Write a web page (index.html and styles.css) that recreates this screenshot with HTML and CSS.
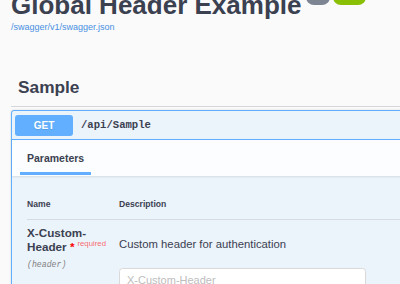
FILE: index.html
```html
<!DOCTYPE html>
<html>
<head>
<meta charset="utf-8">
<link rel="stylesheet" href="styles.css">
</head>
<body>
<div class="page">
  <div class="info">
    <h2 class="title">Global Header Example<span class="badge badge-version">v1</span><span class="badge badge-oas">OAS3</span></h2>
    <a class="spec-url" href="#">/swagger/v1/swagger.json</a>
  </div>
  <div class="tag-section">
    <h3 class="tag">Sample</h3>
    <div class="opblock">
      <div class="summary">
        <span class="method">GET</span>
        <span class="path">/api/Sample</span>
      </div>
      <div class="section-header">
        <div class="tab">Parameters</div>
      </div>
      <div class="params">
        <div class="thead">
          <div class="th">Name</div>
          <div class="th">Description</div>
        </div>
        <div class="prow">
          <div class="pname-col">
            <div class="pname">X-Custom-Header<span class="req-star">&nbsp;*</span><span class="req-label">required</span></div>
            <div class="pin">(header)</div>
          </div>
          <div class="pdesc-col">
            <p class="pdesc">Custom header for authentication</p>
            <input class="pinput" type="text" placeholder="X-Custom-Header">
          </div>
        </div>
      </div>
    </div>
  </div>
</div>
</body>
</html>
```

FILE: styles.css
```css
html, body {
  margin: 0;
  padding: 0;
}
body {
  background: #fafafa;
  overflow: hidden;
  font-family: "Liberation Sans", Arial, sans-serif;
  color: #3b4151;
}
.page {
  display: flow-root;
  width: 460px;
  padding-left: 11px;
}
.title {
  margin: -8px 0 0;
  font-size: 26px;
  line-height: 26px;
  font-weight: 700;
  color: #3b4151;
  white-space: nowrap;
}
.badge {
  display: inline-block;
  vertical-align: 14px;
  margin: -6px 0 0 5px;
  padding: 2px 4px;
  border-radius: 57px;
  font-size: 9.5px;
  line-height: 12px;
  font-weight: 400;
  color: #fff;
}
.badge-version {
  background: #7d8492;
  padding: 2px 6.5px;
}
.badge-oas {
  background: #89bf04;
  margin-left: 3px;
}
.spec-url {
  display: block;
  margin-top: 3.4px;
  font-size: 9px;
  line-height: 12px;
  color: #4990e2;
  text-decoration: none;
}
.tag-section {
  margin-top: 43.7px;
}
.tag {
  margin: 0;
  padding: 0 0 8.9px 7px;
  font-size: 17.3px;
  line-height: 20px;
  font-weight: 700;
  border-bottom: 1px solid #d5d6d9;
}
.opblock {
  margin-top: 3px;
  border: 1px solid #61affe;
  border-radius: 3px;
  background: #ebf3fb;
  box-shadow: 0 0 2px rgba(0, 0, 0, .19);
}
.summary {
  display: flex;
  align-items: center;
  gap: 8px;
  padding: 4px 3px 3px;
  border-bottom: 1px solid #61affe;
}
.method {
  width: 58px;
  height: 21px;
  border-radius: 3px;
  background: #61affe;
  color: #fff;
  font-size: 10px;
  font-weight: 700;
  display: flex;
  align-items: center;
  justify-content: center;
  text-shadow: 0 1px 0 rgba(0, 0, 0, .1);
}
.path {
  font-family: "Liberation Mono", "Courier New", monospace;
  font-weight: 700;
  font-size: 10.6px;
  color: #3b4151;
}
.section-header {
  display: flex;
  padding: 12px 8px 1px;
  background: rgba(255, 255, 255, .8);
  box-shadow: 0 1px 2px rgba(0, 0, 0, .1);
}
.tab {
  padding: 0 7px 7px;
  border-bottom: 3px solid #61affe;
  font-size: 10.5px;
  line-height: 13px;
  font-weight: 700;
}
.params {
  padding: 23px 0 20px 15px;
}
.thead {
  display: grid;
  grid-template-columns: 92px 1fr;
  padding-bottom: 9px;
  border-bottom: 1px solid #d6dbe2;
}
.th {
  font-size: 8.6px;
  line-height: 11px;
  font-weight: 700;
}
.prow {
  display: grid;
  grid-template-columns: 92px 1fr;
  padding-top: 5.8px;
}
.pname {
  font-size: 11.7px;
  line-height: 14.3px;
  font-weight: 700;
}
.req-star {
  color: red;
}
.req-label {
  padding-left: 3px;
  color: rgba(255, 0, 0, .6);
  font-size: 7.8px;
  line-height: 7px;
  font-weight: 400;
  vertical-align: 5px;
}
.pin {
  margin-top: 4.9px;
  font-family: "Liberation Mono", "Courier New", monospace;
  font-style: italic;
  font-size: 8.2px;
  line-height: 11px;
  color: #808080;
}
.pdesc {
  margin: 11.1px 0 0;
  font-size: 11.3px;
  line-height: 15px;
}
.pinput {
  display: block;
  box-sizing: border-box;
  width: 247px;
  margin-top: 16.1px;
  padding: 5px 7px;
  border: 1px solid #d9d9d9;
  border-radius: 3.5px;
  background: #fff;
  font-family: "Liberation Sans", Arial, sans-serif;
  font-size: 11px;
  line-height: 13px;
  color: #3b4151;
  outline: none;
}
.pinput::placeholder {
  color: #bdbdbd;
}
```
